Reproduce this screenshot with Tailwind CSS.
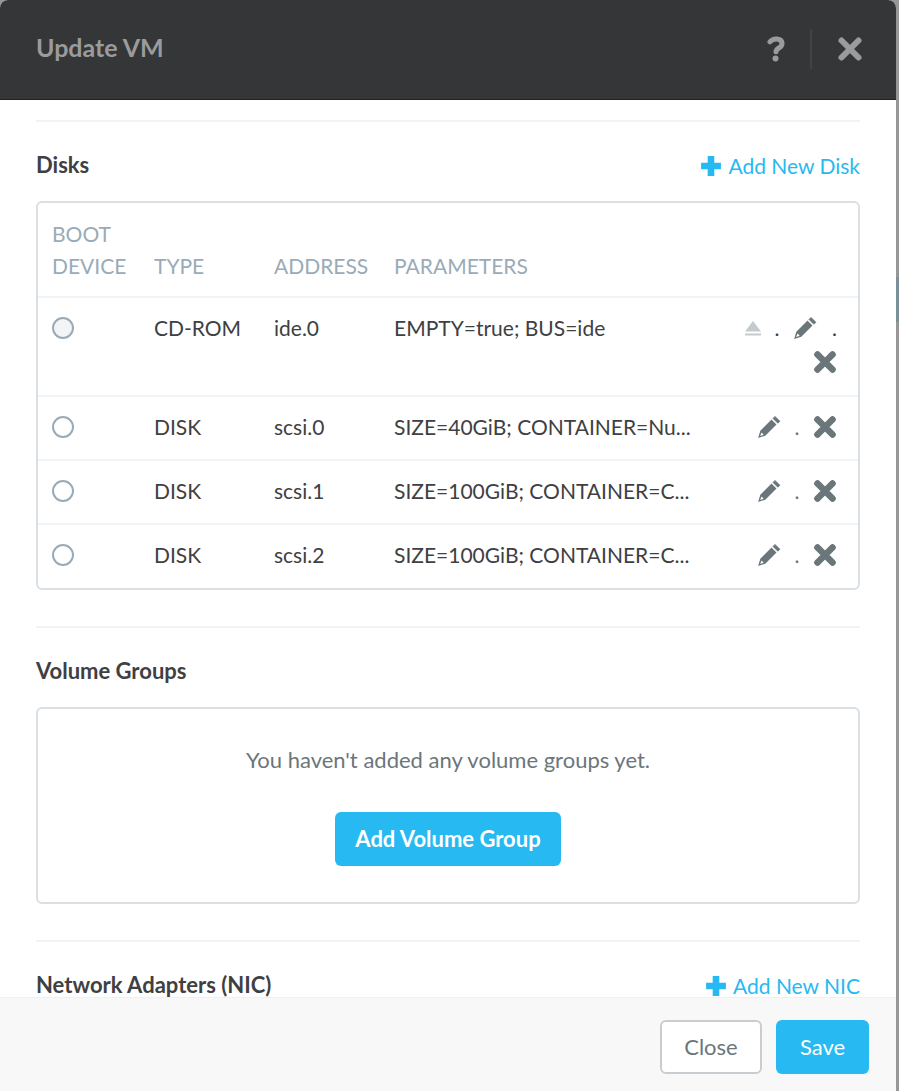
<!DOCTYPE html>
<html lang="en">
<head>
<meta charset="utf-8">
<title>Update VM</title>
<script src="https://cdn.jsdelivr.net/npm/@tailwindcss/browser@4"></script>
</head>
<body class="flex h-screen overflow-hidden bg-[#979797] font-['Lato','Open_Sans',sans-serif] text-[22px] text-[#3e4042]">
<svg class="hidden" aria-hidden="true">
  <symbol id="cross" viewBox="0 0 24 24"><path d="M4.500 4.500 19.500 19.500M19.500 4.500 4.500 19.500" fill="none" stroke="currentColor" stroke-width="6.600" stroke-linecap="round"/></symbol>
  <symbol id="close" viewBox="0 0 28 28"><path d="M5.500 5.500 22.500 22.500M22.500 5.500 5.500 22.500" fill="none" stroke="currentColor" stroke-width="6" stroke-linecap="round"/></symbol>
  <symbol id="plus" viewBox="0 0 20 20"><path d="M7 1h6v6h6v6h-6v6H7v-6H1V7h6z" fill="currentColor"/></symbol>
  <symbol id="pencil" viewBox="0 0 24 24"><path d="M14.500 4.500 19.500 9.500 8.300 20.700 1.200 22.900 1.600 21.400 3.300 15.700z M4.600 17.600 3.200 20.900 6.700 19.700z" fill="currentColor" fill-rule="evenodd"/><path d="M16 3.400 18 1.400 22.900 6.300 20.800 8.200z" fill="currentColor" stroke="currentColor" stroke-width=".8" stroke-linejoin="round"/></symbol>
  <symbol id="eject" viewBox="0 0 16 16"><path d="M8 1 16 11.500H0zM0 13.500h16v2H0z" fill="currentColor"/></symbol>
</svg>
<div class="flex h-full grow flex-col overflow-hidden rounded-t-lg bg-white" role="dialog" aria-labelledby="title">
  <header class="flex h-[100px] shrink-0 items-center border-b border-[#222224] bg-[#353638] pr-8 pb-[2px] pl-9 text-[#9b9b9b]">
    <h1 id="title" class="grow pb-[2px] text-[25px] font-bold">Update VM</h1>
    <button aria-label="Help" class="mr-[22px] flex size-6 items-center justify-center">
      <svg viewBox="0 0 18 26" class="h-[26px] w-[18px]"><path d="M3 5.800C6 2 15 1.500 15 7.700C15 12.500 9 11.500 9 15.800" fill="none" stroke="currentColor" stroke-width="5" stroke-linecap="round"/><circle cx="8.500" cy="22.500" r="3" fill="currentColor"/></svg>
    </button>
    <span class="h-10 w-[2px] bg-[#414244]"></span>
    <button aria-label="Close dialog" class="ml-6"><svg class="size-7"><use href="#close"/></svg></button>
  </header>

  <main class="min-h-0 grow overflow-hidden px-9 pt-5">
    <section class="border-t-2 border-[#f2f3f4] pb-9">
      <div class="flex h-[79px] items-center justify-between pt-2">
        <h2 class="pb-[2px] font-bold">Disks</h2>
        <a href="#" class="flex items-center gap-[6px] text-[21px] text-[#27b9f1]"><svg class="size-[22px]"><use href="#plus"/></svg>Add New Disk</a>
      </div>
      <div class="overflow-hidden rounded-md border-2 border-[#d9dfe2]">
        <table class="w-full table-fixed text-left text-[21px]">
          <colgroup><col class="w-[102px]"><col class="w-[120px]"><col class="w-[120px]"><col><col class="w-[146px]"></colgroup>
          <thead>
            <tr class="h-[94px] align-bottom leading-8 text-[#9aabb7]">
              <th class="pb-[14px] pl-[14px] font-normal">BOOT DEVICE</th>
              <th class="px-[14px] pb-[14px] font-normal">TYPE</th>
              <th class="px-[14px] pb-[14px] font-normal">ADDRESS</th>
              <th class="px-[14px] pb-[14px] font-normal">PARAMETERS</th>
              <th aria-label="Actions"></th>
            </tr>
          </thead>
          <tbody class="align-top leading-8">
            <tr class="h-[99px] border-t-2 border-[#f2f3f4]">
              <td class="px-[14px] pt-[19px]"><input type="radio" name="boot" disabled aria-label="Boot from ide.0" class="block size-[22px] appearance-none rounded-full border-2 border-[#9aabb7] bg-[#f2f4f6]"></td>
              <td class="pt-[14px] pl-[14px] whitespace-nowrap">CD-ROM</td>
              <td class="px-[14px] pt-[14px]">ide.0</td>
              <td class="px-[14px] pt-[14px] whitespace-nowrap">EMPTY=true; BUS=ide</td>
              <td class="pt-[14px] pr-[21px]">
                <div class="flex items-center justify-end">
                  <button disabled aria-label="Eject" class="text-[#c5cacc]"><svg class="size-4"><use href="#eject"/></svg></button>
                  <span class="w-8 text-center">.</span>
                  <button aria-label="Edit ide.0" class="text-[#6b767b]"><svg class="size-6"><use href="#pencil"/></svg></button>
                  <span class="w-5 text-right">.</span>
                </div>
                <button aria-label="Remove ide.0" class="ml-auto block pt-[6px] text-[#6b767b]"><svg class="size-6"><use href="#cross"/></svg></button>
              </td>
            </tr>
            <tr class="h-[64px] border-t-2 border-[#f2f3f4]">
              <td class="px-[14px] pt-[19px]"><input type="radio" name="boot" aria-label="Boot from scsi.0" class="block size-[22px] appearance-none rounded-full border-2 border-[#9aabb7] bg-white"></td>
              <td class="px-[14px] pt-[14px]">DISK</td>
              <td class="px-[14px] pt-[14px]">scsi.0</td>
              <td class="px-[14px] pt-[14px] whitespace-nowrap">SIZE=40GiB; CONTAINER=Nu...</td>
              <td class="pt-[14px] pr-[21px]">
                <div class="flex items-center justify-end text-[#6b767b]">
                  <button aria-label="Edit scsi.0"><svg class="size-6"><use href="#pencil"/></svg></button>
                  <span class="w-8 text-center">.</span>
                  <button aria-label="Remove scsi.0"><svg class="size-6"><use href="#cross"/></svg></button>
                </div>
              </td>
            </tr>
            <tr class="h-[64px] border-t-2 border-[#f2f3f4]">
              <td class="px-[14px] pt-[19px]"><input type="radio" name="boot" aria-label="Boot from scsi.1" class="block size-[22px] appearance-none rounded-full border-2 border-[#9aabb7] bg-white"></td>
              <td class="px-[14px] pt-[14px]">DISK</td>
              <td class="px-[14px] pt-[14px]">scsi.1</td>
              <td class="px-[14px] pt-[14px] whitespace-nowrap">SIZE=100GiB; CONTAINER=C...</td>
              <td class="pt-[14px] pr-[21px]">
                <div class="flex items-center justify-end text-[#6b767b]">
                  <button aria-label="Edit scsi.1"><svg class="size-6"><use href="#pencil"/></svg></button>
                  <span class="w-8 text-center">.</span>
                  <button aria-label="Remove scsi.1"><svg class="size-6"><use href="#cross"/></svg></button>
                </div>
              </td>
            </tr>
            <tr class="h-[64px] border-t-2 border-[#f2f3f4]">
              <td class="px-[14px] pt-[19px]"><input type="radio" name="boot" aria-label="Boot from scsi.2" class="block size-[22px] appearance-none rounded-full border-2 border-[#9aabb7] bg-white"></td>
              <td class="px-[14px] pt-[14px]">DISK</td>
              <td class="px-[14px] pt-[14px]">scsi.2</td>
              <td class="px-[14px] pt-[14px] whitespace-nowrap">SIZE=100GiB; CONTAINER=C...</td>
              <td class="pt-[14px] pr-[21px]">
                <div class="flex items-center justify-end text-[#6b767b]">
                  <button aria-label="Edit scsi.2"><svg class="size-6"><use href="#pencil"/></svg></button>
                  <span class="w-8 text-center">.</span>
                  <button aria-label="Remove scsi.2"><svg class="size-6"><use href="#cross"/></svg></button>
                </div>
              </td>
            </tr>
          </tbody>
        </table>
      </div>
    </section>

    <section class="border-t-2 border-[#f2f3f4] pb-9">
      <div class="flex h-[79px] items-center pt-2"><h2 class="pb-[2px] font-bold">Volume Groups</h2></div>
      <div class="flex flex-col items-center rounded-md border-2 border-[#d9dfe2] pt-[35px] pb-9">
        <p class="leading-8 text-[#6b767b]">You haven't added any volume groups yet.</p>
        <button class="mt-9 h-[54px] rounded-md bg-[#27b9f1] px-5 pb-[2px] font-bold text-white">Add Volume Group</button>
      </div>
    </section>

    <section class="border-t-2 border-[#f2f3f4]">
      <div class="flex h-[79px] items-center justify-between pt-2">
        <h2 class="pb-[2px] leading-7 font-bold">Network Adapters (NIC)</h2>
        <a href="#" class="flex items-center gap-[6px] text-[21px] leading-7 text-[#27b9f1]"><svg class="size-[22px]"><use href="#plus"/></svg>Add New NIC</a>
      </div>
    </section>
  </main>

  <footer class="flex h-[94px] shrink-0 items-start justify-end gap-[14px] border-t border-[#eff0f1] bg-[#f8f8f8] pt-[22px] pr-[27px]">
    <button class="h-[54px] w-[102px] rounded-md border-2 border-[#c8cdd2] bg-white pb-[2px] text-[#6b767b]">Close</button>
    <button class="h-[54px] w-[93px] rounded-md bg-[#27b9f1] pb-[2px] text-white">Save</button>
  </footer>
</div>
<div class="w-[3px] shrink-0 pt-[277px]" aria-hidden="true">
  <div class="h-[45px] bg-[#7b919a]"></div>
</div>
</body>
</html>
